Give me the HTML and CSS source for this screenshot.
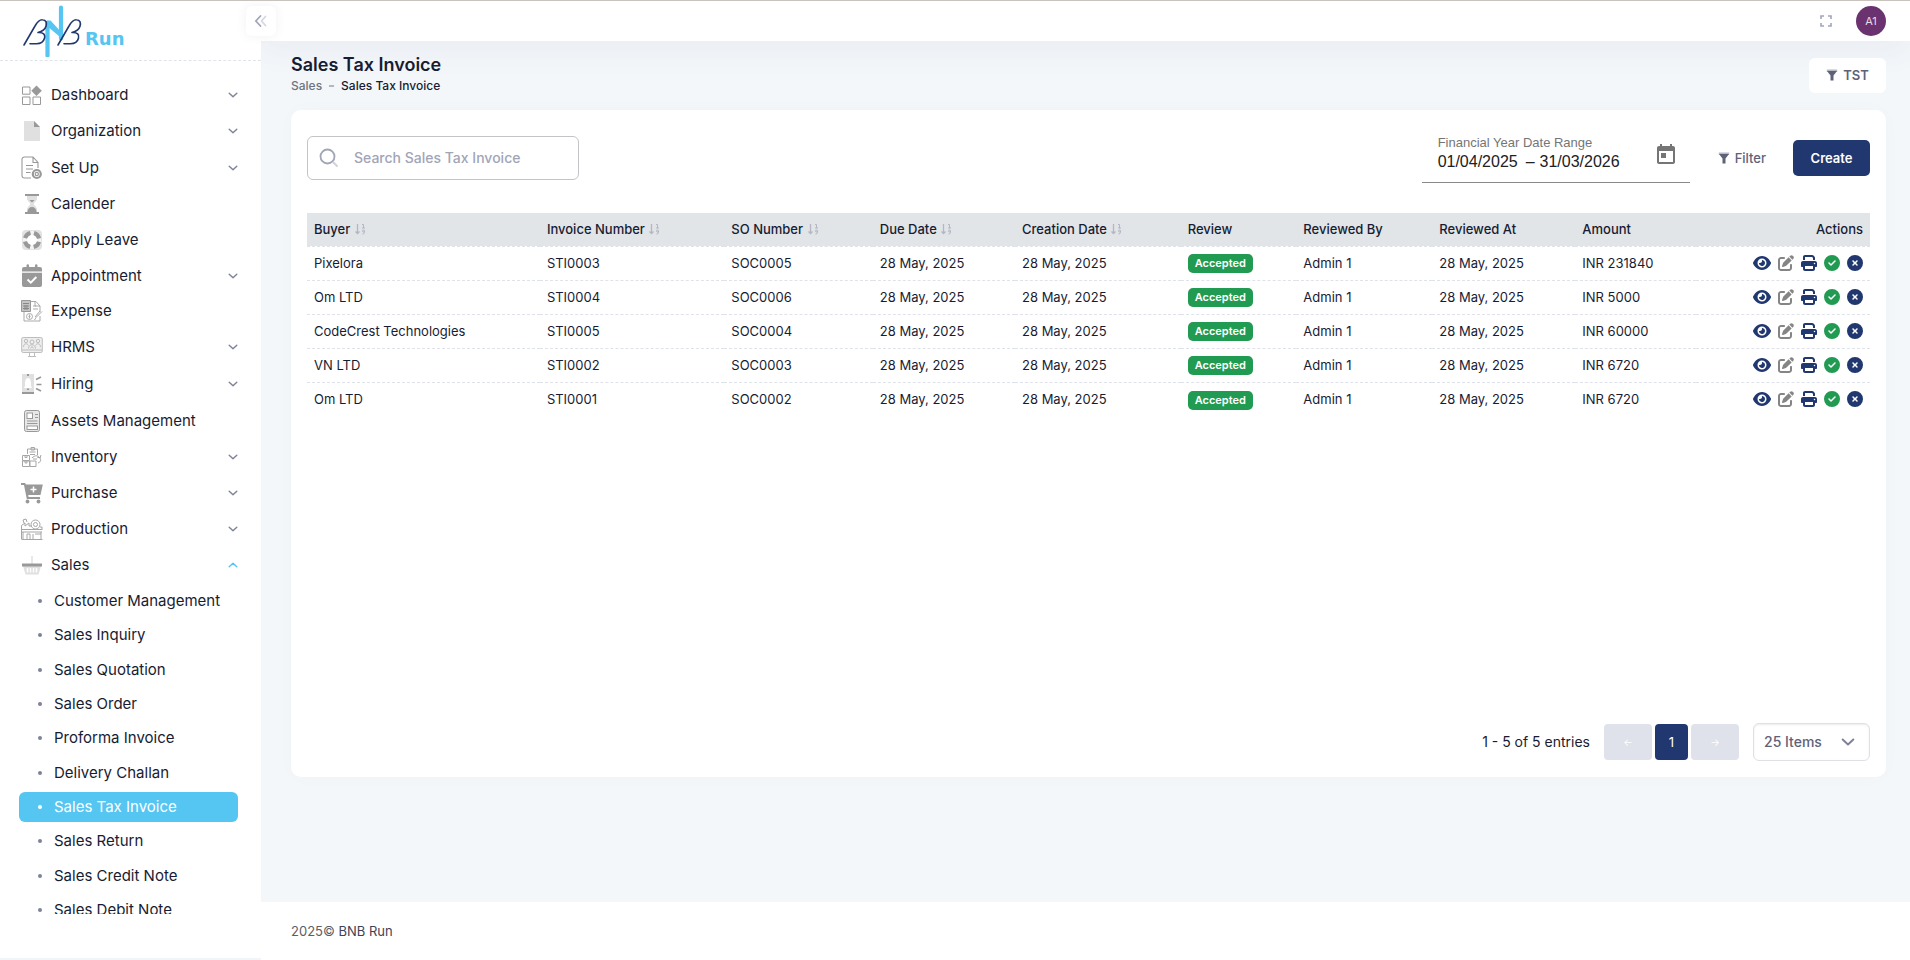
FILE: index.html
```html
<!DOCTYPE html>
<html lang="en">
<head>
<meta charset="utf-8">
<meta name="viewport" content="width=device-width, initial-scale=1">
<title>Sales Tax Invoice</title>
<link rel="stylesheet" href="styles.css">
</head>
<body>
<svg class="sprite" aria-hidden="true">
  <symbol id="i-down" viewBox="0 0 10 10"><path d="M1.2 3.2 5 6.8l3.8-3.6" fill="none" stroke="currentColor" stroke-width="1.4" stroke-linecap="round" stroke-linejoin="round"/></symbol>
  <symbol id="i-up" viewBox="0 0 10 10"><path d="M1.2 6.8 5 3.2l3.8 3.6" fill="none" stroke="currentColor" stroke-width="1.4" stroke-linecap="round" stroke-linejoin="round"/></symbol>
  <symbol id="i-dashboard" viewBox="0 0 22 22"><path d="M1.5 3h7.5v7.200h-7.500zM1.500 13h7.500v7.500h-7.500zM12 13h7.500v7.500h-7.500z" fill="none" stroke="#999" stroke-width="1"/><path d="M15.500 1.500 20.800 6.800 15.500 12 10.300 6.800z" fill="#999"/></symbol>
  <symbol id="i-organization" viewBox="0 0 22 22"><path d="M3 1h10l6 6v14H3z" fill="#e0e0e0"/><path d="M13 1l6 6h-6z" fill="#999"/></symbol>
  <symbol id="i-setup" viewBox="0 0 22 24"><path d="M10 22H3.500a2.500 2.500 0 0 1-2.500-2.500V3.500A2.500 2.500 0 0 1 3.500 1H12l5 5.500V12M12 1v5.500h5M5 9.500h7M5 13h7M5 16.500h4.500" fill="none" stroke="#999" stroke-width="1.1"/><circle cx="15.800" cy="18" r="4" fill="#fff" stroke="#999" stroke-width="2.200"/><circle cx="15.800" cy="18" r="1.600" fill="none" stroke="#999" stroke-width="1.200"/></symbol>
  <symbol id="i-calender" viewBox="0 0 22 22"><path d="M6 2.500h10v4L12.500 11l3.500 4.500v4H6v-4L9.500 11 6 6.500z" fill="#e0e0e0"/><path d="M4 1h14v2H4zM4 19h14v2H4zM8.500 7h5L11 9.500zM6.500 19c0-3 2-5 4.500-5s4.500 2 4.500 5z" fill="#999"/></symbol>
  <symbol id="i-leave" viewBox="0 0 22 22"><rect x="1" y="1" width="20" height="20" rx="4" fill="#e2e2e2"/><circle cx="11" cy="11" r="7" fill="none" stroke="#f4f4f4" stroke-width="4.500"/><circle cx="11" cy="11" r="7" fill="none" stroke="#999" stroke-width="4.500" stroke-dasharray="7.500 3.496" stroke-dashoffset="-1.750"/><circle cx="11" cy="11" r="5" fill="#fff"/></symbol>
  <symbol id="i-appointment" viewBox="0 0 22 24"><path d="M3 3h2.500V1.500a1.250 1.250 0 0 1 2.500 0V3h6V1.500a1.250 1.250 0 0 1 2.500 0V3H19a2 2 0 0 1 2 2v2.500H1V5a2 2 0 0 1 2-2zM1 8.700h20V21a2 2 0 0 1-2 2H3a2 2 0 0 1-2-2z" fill="#999"/><path d="M6.500 15.500l3.300 3.200 5.500-5.700" fill="none" stroke="#fff" stroke-width="2"/></symbol>
  <symbol id="i-expense" viewBox="0 0 22 22"><g fill="none" stroke="#aaa"><path d="M3 12v9h16v-5M10 1.500h5L19 6v6M12 6h3M12 9h5M14 1.500V6h5"/><circle cx="8.500" cy="16.500" r="3"/><path d="M8.500 14.500v4M7.500 16.500h2M21 11.500l-6 6-1.500 2.500M19 11l-5 6"/></g><path d="M.5.500h9v11h-9z" fill="#c4c4c4" stroke="#999"/><path d="M2 3.500h6M2 6h6M2 8.500h6M4 5v5M6 5v5" stroke="#888" fill="none"/></symbol>
  <symbol id="i-hrms" viewBox="0 0 22 22"><g fill="none" stroke="#bdbdbd"><rect x=".7" y="1.500" width="20.600" height="15" rx="1.500" fill="#eee"/><path d="M1 14h20M8.500 17v3M13.500 17v3M7 20.500h8"/><circle cx="11" cy="6" r="2"/><circle cx="5" cy="5" r="1.700"/><circle cx="17" cy="5" r="1.700"/><path d="M7.500 12.500c0-5 7-5 7 0M2.500 11c0-4 4-4 5-1.500M19.500 11c0-4-4-4-5-1.500M9.500 12.500l1.500-2 1.500 2"/></g></symbol>
  <symbol id="i-hiring" viewBox="0 0 22 22"><path d="M1 1h12v19H1z" fill="#e0e0e0"/><path d="M1 19h12v2H1zM6 1h2v2H6z" fill="#999"/><path d="M7 5c-3 0-3 4-3 8l-1 2h8l-1-2c0-4 0-8-3-8z" fill="#fff"/><path d="M6 15.500h2v1.500H6z" fill="#999"/><path d="M15 6.500l5-2.500M15.500 11.500h5M15 15.500l5 2.500" stroke="#999" stroke-width="1.700"/></symbol>
  <symbol id="i-assets" viewBox="0 0 22 24"><g fill="none" stroke="#999"><rect x="3.500" y="1.500" width="15" height="21" rx="2" fill="#e8e8e8"/><rect x="6" y="4" width="5.500" height="5.500" fill="#fff"/><path d="M14 5.500h3M14 8.500h3M6 12h10.500M6 14.500h10.500"/><rect x="6" y="17" width="10.500" height="3.500" fill="#fff"/></g></symbol>
  <symbol id="i-inventory" viewBox="0 0 22 22"><g fill="none" stroke="#a6a6a6"><path d="M1.500 9.500h7v5h-7zM1.500 15h7v5.500h-7zM9 15h6v5.500H9zM4 9.500v2h2v-2M4 15v2h2v-2M6.500 8V3h10v6M10 1.500h3.500V4H10zM8.500 6h6M9 8.500h5M11 12c3-3 6-3 8 0M12 13h4M17 17c3-1 3-3 2-5.500M20 9l-1 3-3-1"/></g></symbol>
  <symbol id="i-purchase" viewBox="0 0 22 22"><path d="M0 1h4l1 1.500h16.800L19.500 13H7.200l.4 2H19v2H5.800L3 3H0z" fill="#999"/><path d="M12.500 4.500v6M9.500 7.500h6" stroke="#fff" stroke-width="1.500"/><circle cx="6.500" cy="19.500" r="1.900" fill="#999"/><circle cx="17.500" cy="19.500" r="1.900" fill="#999"/></symbol>
  <symbol id="i-production" viewBox="0 0 22 22"><g fill="none" stroke="#a6a6a6"><path d="M.5 21V7.500L4 5v3l4-3v3h3M.5 21.500h21M1 11.500h20M1 14h20M2 14v7M6 21v-5h3v5M12 21v-5M20 14v7M3 5l-1-3 3-1 1 3M14 16h6"/><circle cx="14.500" cy="6.500" r="4.500"/><circle cx="14.500" cy="6.500" r="2"/><path d="M19 9h2v3"/></g></symbol>
  <symbol id="i-sales" viewBox="0 0 22 22"><path d="M10.300 2h1.400v8h-1.400zM2 12h18l-2.500 8.500h-13z" fill="#e0e0e0"/><path d="M1 9.500h20v3H1z" fill="#999"/><path d="M6.500 14v4.500M9.500 14v4.500M12.500 14v4.500M15.500 14v4.500" stroke="#fff" stroke-width="1.500"/></symbol>
  <symbol id="i-funnel" viewBox="0 0 12 12"><path d="M1 2h10L7.500 6.500v5h-3v-5z" fill="currentColor"/><path d="M.8 .5h10.400v2.200H.8z" fill="currentColor" opacity=".45"/></symbol>
  <symbol id="i-sort" viewBox="0 0 12 12"><g fill="none" stroke="#b5b5c3"><path d="M3.500 1v9.500M1.500 8.500l2 2 2-2" stroke-width="1.300"/><path d="M8 1.500h1.500V5M8 5h3M10.500 8a1 1 0 1 0-2 0 1 1 0 1 0 2 0zM10.500 8v1.500l-1 1.500H8.500"/></g></symbol>
  <symbol id="i-eye" viewBox="0 0 576 512"><path fill="currentColor" d="M288 32c-80.800 0-145.500 36.800-192.600 80.600C48.600 156 17.300 208 2.500 243.700c-3.300 7.900-3.300 16.700 0 24.600C17.300 304 48.600 356 95.400 399.400C142.500 443.200 207.200 480 288 480s145.500-36.800 192.600-80.600c46.800-43.500 78.100-95.400 93-131.100c3.300-7.900 3.300-16.700 0-24.600c-14.900-35.700-46.200-87.700-93-131.100C433.500 68.800 368.800 32 288 32zM144 256a144 144 0 1 1 288 0 144 144 0 1 1 -288 0zm144-64c0 35.300-28.700 64-64 64c-7.100 0-13.900-1.200-20.300-3.300c-5.500-1.800-11.900 1.600-11.700 7.400c.3 6.900 1.300 13.800 3.200 20.700c13.700 51.200 66.400 81.600 117.600 67.900s81.600-66.400 67.900-117.600c-11.100-41.500-47.800-69.400-88.600-71.100c-5.800-.2-9.200 6.100-7.400 11.700c2.100 6.400 3.300 13.200 3.300 20.300z"/></symbol>
  <symbol id="i-edit" viewBox="0 0 512 512"><path fill="currentColor" d="M471.600 21.700c-21.900-21.900-57.300-21.900-79.200 0L362.300 51.700l97.900 97.900 30.100-30.100c21.900-21.900 21.900-57.300 0-79.200L471.600 21.700zm-299.200 220c-6.100 6.100-10.800 13.600-13.500 21.900l-29.600 88.800c-2.900 8.600-.6 18.100 5.800 24.600s15.900 8.700 24.600 5.800l88.800-29.600c8.200-2.700 15.700-7.400 21.900-13.500L437.700 172.300 339.700 74.300 172.400 241.700zM96 64C43 64 0 107 0 160V416c0 53 43 96 96 96H352c53 0 96-43 96-96V320c0-17.700-14.300-32-32-32s-32 14.300-32 32v96c0 17.700-14.300 32-32 32H96c-17.700 0-32-14.300-32-32V160c0-17.700 14.300-32 32-32h96c17.700 0 32-14.300 32-32s-14.300-32-32-32H96z"/></symbol>
  <symbol id="i-print" viewBox="0 0 512 512"><path fill="currentColor" d="M128 0C92.700 0 64 28.700 64 64v96h64V64H354.700L384 93.300V160h64V93.300c0-17-6.700-33.300-18.700-45.300L400 18.700C388 6.700 371.700 0 354.700 0H128zM384 352v32 64H128V384 368 352H384zm64 32h32c17.700 0 32-14.300 32-32V256c0-35.300-28.700-64-64-64H64c-35.300 0-64 28.700-64 64v96c0 17.700 14.300 32 32 32H64v64c0 35.300 28.700 64 64 64H384c35.300 0 64-28.700 64-64V384zM432 248a24 24 0 1 1 0 48 24 24 0 1 1 0-48z"/></symbol>
  <symbol id="i-check" viewBox="0 0 512 512"><path fill="currentColor" d="M256 512A256 256 0 1 0 256 0a256 256 0 1 0 0 512zM369 209L241 337c-9.400 9.400-24.600 9.400-33.900 0l-64-64c-9.400-9.400-9.400-24.600 0-33.900s24.600-9.400 33.900 0l47 47L335 175c9.400-9.400 24.600-9.400 33.900 0s9.400 24.600 0 33.900z"/></symbol>
  <symbol id="i-cross" viewBox="0 0 512 512"><path fill="currentColor" d="M256 512A256 256 0 1 0 256 0a256 256 0 1 0 0 512zM175 175c9.400-9.400 24.600-9.400 33.900 0l47 47 47-47c9.400-9.400 24.600-9.400 33.900 0s9.400 24.600 0 33.900l-47 47 47 47c9.400 9.400 9.400 24.600 0 33.900s-24.600 9.400-33.900 0l-47-47-47 47c-9.400 9.400-24.600 9.400-33.900 0s-9.400-24.600 0-33.900l47-47-47-47c-9.400-9.400-9.400-24.600 0-33.900z"/></symbol>
</svg>

<div class="app">
  <aside class="sidebar">
    <a class="brand" href="#" aria-label="BNB Run">
      <svg class="brand-mark" viewBox="0 0 60 52" aria-hidden="true">
        <path d="M24.500 17.500v33M38 2.500v31" stroke="#55c5f2" stroke-width="4.200" stroke-linecap="round"/>
        <path d="M24.500 15.500 27.500 15.500 40 29v5.500L24 21z" fill="#55c5f2"/>
        <g fill="none" stroke="#20376f" stroke-width="1.600" stroke-linecap="round" stroke-linejoin="round">
          <path d="M1 40 12 21C15 15.500 17 14.500 19.500 14.700c3.500.2 4.500 3 3.500 6.500-1 3.300-4 5.300-8 6.300 5.500-.3 7.500 2 6.500 5.800-1 3.700-4 5.500-8 5.500H7"/>
          <path d="M35 40 46 21c3-5.500 5-6.500 7.500-6.300 3.500.2 4.500 3 3.500 6.500-1 3.300-4 5.300-8 6.300 5.500-.3 7.500 2 6.500 5.800-1 3.700-4 5.500-8 5.500H41"/>
        </g>
      </svg>
      <span class="brand-name">Run</span>
    </a>
    <button class="collapse" type="button" aria-label="Collapse menu">
      <svg viewBox="0 0 14 14" width="14" height="14" fill="none" stroke-width="1.800" stroke-linecap="round" stroke-linejoin="round"><path d="M6.500 2 1.800 7l4.700 5" stroke="#a1a5b7"/><path d="M11.500 2.500 7.500 7l4 4.500" stroke="#d5d7e0"/></svg>
    </button>
    <nav class="menu" aria-label="Main">
      <a class="item" href="#"><svg class="ico"><use href="#i-dashboard"/></svg><span>Dashboard</span><svg class="chev"><use href="#i-down"/></svg></a>
      <a class="item" href="#"><svg class="ico"><use href="#i-organization"/></svg><span>Organization</span><svg class="chev"><use href="#i-down"/></svg></a>
      <a class="item roomy" href="#"><svg class="ico tall"><use href="#i-setup"/></svg><span>Set Up</span><svg class="chev"><use href="#i-down"/></svg></a>
      <a class="item" href="#"><svg class="ico"><use href="#i-calender"/></svg><span>Calender</span></a>
      <a class="item" href="#"><svg class="ico"><use href="#i-leave"/></svg><span>Apply Leave</span></a>
      <a class="item snug" href="#"><svg class="ico tall"><use href="#i-appointment"/></svg><span>Appointment</span><svg class="chev"><use href="#i-down"/></svg></a>
      <a class="item" href="#"><svg class="ico"><use href="#i-expense"/></svg><span>Expense</span></a>
      <a class="item" href="#"><svg class="ico"><use href="#i-hrms"/></svg><span>HRMS</span><svg class="chev"><use href="#i-down"/></svg></a>
      <a class="item roomy" href="#"><svg class="ico"><use href="#i-hiring"/></svg><span>Hiring</span><svg class="chev"><use href="#i-down"/></svg></a>
      <a class="item roomy" href="#"><svg class="ico tall"><use href="#i-assets"/></svg><span>Assets Management</span></a>
      <a class="item" href="#"><svg class="ico"><use href="#i-inventory"/></svg><span>Inventory</span><svg class="chev"><use href="#i-down"/></svg></a>
      <a class="item" href="#"><svg class="ico"><use href="#i-purchase"/></svg><span>Purchase</span><svg class="chev"><use href="#i-down"/></svg></a>
      <a class="item" href="#"><svg class="ico"><use href="#i-production"/></svg><span>Production</span><svg class="chev"><use href="#i-down"/></svg></a>
      <a class="item open" href="#"><svg class="ico"><use href="#i-sales"/></svg><span>Sales</span><svg class="chev"><use href="#i-up"/></svg></a>
      <div class="submenu">
        <a class="sub" href="#">Customer Management</a>
        <a class="sub" href="#">Sales Inquiry</a>
        <a class="sub" href="#">Sales Quotation</a>
        <a class="sub" href="#">Sales Order</a>
        <a class="sub" href="#">Proforma Invoice</a>
        <a class="sub" href="#">Delivery Challan</a>
        <a class="sub active" href="#" aria-current="page">Sales Tax Invoice</a>
        <a class="sub" href="#">Sales Return</a>
        <a class="sub" href="#">Sales Credit Note</a>
        <a class="sub" href="#">Sales Debit Note</a>
      </div>
    </nav>
  </aside>

  <div class="page">
    <header class="topbar">
      <button class="plain" type="button" aria-label="Full screen"><svg viewBox="0 0 12 12" width="12" height="12" fill="none" stroke="#a1a5b7" stroke-width="1.600"><path d="M1 4V1h3M8 1h3v3M11 8v3H8M4 11H1V8"/></svg></button>
      <button class="avatar" type="button">A1</button>
    </header>

    <main class="content">
      <div class="titlebar">
        <div>
          <h1 class="title">Sales Tax Invoice</h1>
          <div class="crumbs"><a href="#">Sales</a><i class="dash"></i><span>Sales Tax Invoice</span></div>
        </div>
        <button class="company" type="button"><svg class="funnel"><use href="#i-funnel"/></svg>TST</button>
      </div>

      <section class="card">
        <div class="toolbar">
          <label class="search">
            <svg viewBox="0 0 20 20" width="20" height="20" fill="none" stroke-linecap="round"><circle cx="8.500" cy="8.500" r="7" stroke="#a1a5b7" stroke-width="1.800"/><path d="M14.500 14.500 18 18" stroke="#d0d2dc" stroke-width="2"/></svg>
            <input type="text" placeholder="Search Sales Tax Invoice" aria-label="Search Sales Tax Invoice">
          </label>
          <div class="tools">
            <div class="range">
              <div class="range-main">
                <label for="from">Financial Year Date Range</label>
                <div class="range-values"><input id="from" type="text" value="01/04/2025"><span>–</span><input type="text" value="31/03/2026" aria-label="End date"></div>
              </div>
              <button class="plain" type="button" aria-label="Open calendar"><svg viewBox="0 0 24 24" width="24" height="24" fill="#757575"><path d="M19 3h-1V1h-2v2H8V1H6v2H5c-1.110 0-1.990.9-1.990 2L3 19c0 1.100.89 2 2 2h14c1.100 0 2-.9 2-2V5c0-1.100-.9-2-2-2zm0 16H5V8h14v11zM7 10h5v5H7z"/></svg></button>
            </div>
            <div class="tool-buttons">
              <button class="filter" type="button"><svg class="funnel"><use href="#i-funnel"/></svg>Filter</button>
              <button class="create" type="button">Create</button>
            </div>
          </div>
        </div>

        <div class="table-wrap">
          <table class="grid">
            <colgroup><col class="c-buyer"><col class="c-invoice"><col class="c-so"><col class="c-due"><col class="c-created"><col class="c-review"><col class="c-by"><col class="c-at"><col class="c-amount"><col></colgroup>
            <thead>
              <tr><th>Buyer <svg class="sort"><use href="#i-sort"/></svg></th><th>Invoice Number <svg class="sort"><use href="#i-sort"/></svg></th><th>SO Number <svg class="sort"><use href="#i-sort"/></svg></th><th>Due Date <svg class="sort"><use href="#i-sort"/></svg></th><th>Creation Date <svg class="sort"><use href="#i-sort"/></svg></th><th>Review</th><th>Reviewed By</th><th>Reviewed At</th><th>Amount</th><th class="end">Actions</th></tr>
            </thead>
            <tbody>
              <tr><td>Pixelora</td><td>STI0003</td><td>SOC0005</td><td>28 May, 2025</td><td>28 May, 2025</td><td><span class="badge">Accepted</span></td><td>Admin 1</td><td>28 May, 2025</td><td>INR 231840</td>
                <td><div class="actions"><button type="button" aria-label="View"><svg class="wide"><use href="#i-eye"/></svg></button><button class="grey" type="button" aria-label="Edit"><svg><use href="#i-edit"/></svg></button><button type="button" aria-label="Print"><svg><use href="#i-print"/></svg></button><button class="green" type="button" aria-label="Accept"><svg><use href="#i-check"/></svg></button><button type="button" aria-label="Reject"><svg><use href="#i-cross"/></svg></button></div></td></tr>
              <tr><td>Om LTD</td><td>STI0004</td><td>SOC0006</td><td>28 May, 2025</td><td>28 May, 2025</td><td><span class="badge">Accepted</span></td><td>Admin 1</td><td>28 May, 2025</td><td>INR 5000</td>
                <td><div class="actions"><button type="button" aria-label="View"><svg class="wide"><use href="#i-eye"/></svg></button><button class="grey" type="button" aria-label="Edit"><svg><use href="#i-edit"/></svg></button><button type="button" aria-label="Print"><svg><use href="#i-print"/></svg></button><button class="green" type="button" aria-label="Accept"><svg><use href="#i-check"/></svg></button><button type="button" aria-label="Reject"><svg><use href="#i-cross"/></svg></button></div></td></tr>
              <tr><td>CodeCrest Technologies</td><td>STI0005</td><td>SOC0004</td><td>28 May, 2025</td><td>28 May, 2025</td><td><span class="badge">Accepted</span></td><td>Admin 1</td><td>28 May, 2025</td><td>INR 60000</td>
                <td><div class="actions"><button type="button" aria-label="View"><svg class="wide"><use href="#i-eye"/></svg></button><button class="grey" type="button" aria-label="Edit"><svg><use href="#i-edit"/></svg></button><button type="button" aria-label="Print"><svg><use href="#i-print"/></svg></button><button class="green" type="button" aria-label="Accept"><svg><use href="#i-check"/></svg></button><button type="button" aria-label="Reject"><svg><use href="#i-cross"/></svg></button></div></td></tr>
              <tr><td>VN LTD</td><td>STI0002</td><td>SOC0003</td><td>28 May, 2025</td><td>28 May, 2025</td><td><span class="badge">Accepted</span></td><td>Admin 1</td><td>28 May, 2025</td><td>INR 6720</td>
                <td><div class="actions"><button type="button" aria-label="View"><svg class="wide"><use href="#i-eye"/></svg></button><button class="grey" type="button" aria-label="Edit"><svg><use href="#i-edit"/></svg></button><button type="button" aria-label="Print"><svg><use href="#i-print"/></svg></button><button class="green" type="button" aria-label="Accept"><svg><use href="#i-check"/></svg></button><button type="button" aria-label="Reject"><svg><use href="#i-cross"/></svg></button></div></td></tr>
              <tr><td>Om LTD</td><td>STI0001</td><td>SOC0002</td><td>28 May, 2025</td><td>28 May, 2025</td><td><span class="badge">Accepted</span></td><td>Admin 1</td><td>28 May, 2025</td><td>INR 6720</td>
                <td><div class="actions"><button type="button" aria-label="View"><svg class="wide"><use href="#i-eye"/></svg></button><button class="grey" type="button" aria-label="Edit"><svg><use href="#i-edit"/></svg></button><button type="button" aria-label="Print"><svg><use href="#i-print"/></svg></button><button class="green" type="button" aria-label="Accept"><svg><use href="#i-check"/></svg></button><button type="button" aria-label="Reject"><svg><use href="#i-cross"/></svg></button></div></td></tr>
            </tbody>
          </table>
        </div>

        <div class="pager">
          <span class="count">1 - 5 of 5 entries</span>
          <div class="pages">
            <button class="step" type="button" disabled aria-label="Previous page">←</button>
            <button class="current" type="button">1</button>
            <button class="step" type="button" disabled aria-label="Next page">→</button>
          </div>
          <div class="size">
            <select aria-label="Items per page"><option>25 Items</option><option>50 Items</option><option>100 Items</option></select>
            <svg class="size-chev"><use href="#i-down"/></svg>
          </div>
        </div>
      </section>
    </main>

    <footer class="footer">2025© <a href="#">BNB Run</a></footer>
  </div>
</div>
</body>
</html>
```

FILE: styles.css
```css
* { box-sizing: border-box; }

body {
  margin: 0;
  border-top: 1px solid #c8c3bc;
  background: #f3f7fa;
  color: #181c32;
  font: 400 13px/20px Inter, "Noto Sans", sans-serif;
}

a { color: inherit; text-decoration: none; }
button, input, select { font: inherit; color: inherit; }
button { border: 0; padding: 0; background: none; cursor: pointer; }

.sprite { position: absolute; width: 0; height: 0; }

.app { display: flex; height: calc(100vh - 1px); }

/* Sidebar */
.sidebar {
  position: relative;
  z-index: 2;
  flex: 0 0 261px;
  display: flex;
  flex-direction: column;
  padding-bottom: 44px;
  background: #fff;
  border-bottom: 2px solid #f1f5fa;
}

.brand {
  flex: none;
  display: flex;
  align-items: center;
  height: 60px;
  padding-left: 23px;
  border-bottom: 1px dashed #e1e3ea;
}
.brand-mark { width: 60px; height: 52px; }
.brand-name {
  padding-top: 17px;
  margin-left: 2px;
  color: #55c5f2;
  font: 700 18px/20px "DejaVu Sans", sans-serif;
}

.collapse {
  position: absolute;
  top: 5px;
  right: -15px;
  display: flex;
  align-items: center;
  justify-content: center;
  width: 30px;
  height: 30px;
  border-radius: 6px;
  background: #fff;
  box-shadow: 0 0 10px rgba(113, 121, 136, 0.1);
}

.menu {
  flex: 1;
  min-height: 0;
  overflow: hidden;
  padding: 16px 23px 0 19px;
  font-size: 15px;
}
.item {
  display: flex;
  align-items: center;
  height: 36px;
  padding-left: 2px;
}
.item.roomy { height: 37px; }
.item.snug { height: 35px; }
.item span { flex: 1; margin-left: 8px; }
.ico { width: 22px; height: 22px; }
.ico.tall { height: 24px; }
.chev { width: 10px; height: 10px; color: #7e8299; }
.open .chev { color: #55c5f2; }

.submenu {
  display: flex;
  flex-direction: column;
  justify-content: space-between;
  height: 342px;
  padding-top: 3px;
}
.sub {
  flex: none;
  display: flex;
  align-items: center;
  height: 30px;
  padding-left: 19px;
  border-radius: 6px;
}
.sub::before {
  content: "";
  width: 4px;
  height: 4px;
  margin-right: 12px;
  border-radius: 50%;
  background: #7e8299;
}
.sub.active { background: #55c5f2; color: #fff; }
.sub.active::before { background: #fff; }

/* Page column */
.page { flex: 1; min-width: 0; display: flex; flex-direction: column; }

.topbar {
  flex: none;
  display: flex;
  align-items: center;
  justify-content: flex-end;
  gap: 24px;
  height: 40px;
  padding-right: 24px;
  background: #fff;
  box-shadow: 0 10px 30px rgba(82, 63, 105, 0.06);
}
.plain { display: flex; }
.avatar {
  width: 30px;
  height: 30px;
  border-radius: 50%;
  background: #6b3270;
  color: #e6dce8;
  font-size: 11px;
}

.content { flex: 1; min-height: 0; padding: 0 24px 0 30px; }

.titlebar {
  display: flex;
  align-items: center;
  justify-content: space-between;
  padding: 13px 0 14px;
}
.title { margin: 0; font-size: 18px; line-height: 22px; font-weight: 600; }
.crumbs { display: flex; align-items: center; font-size: 12px; font-weight: 500; }
.crumbs a { color: #6f7480; }
.dash { width: 5px; height: 2px; margin: 0 7px; background: #b5b5c3; }

.funnel { width: 12px; height: 12px; color: #5e6278; }
.company {
  display: flex;
  align-items: center;
  justify-content: center;
  gap: 5px;
  width: 77px;
  height: 35px;
  border-radius: 6px;
  background: #fff;
  color: #5e6278;
  font-weight: 600;
}

.card {
  display: flex;
  flex-direction: column;
  padding: 26px 16px 16px;
  border-radius: 10px;
  background: #fff;
  box-shadow: 0 0 20px rgba(76, 87, 125, 0.02);
}

.toolbar {
  display: flex;
  align-items: flex-start;
  justify-content: space-between;
  margin-bottom: 30px;
}
.search {
  display: flex;
  align-items: center;
  gap: 15px;
  width: 272px;
  height: 44px;
  padding: 0 11px;
  border: 1px solid #c4c4c8;
  border-radius: 6px;
}
.search svg { flex: none; }
.search input {
  flex: 1;
  min-width: 0;
  padding: 0;
  border: 0;
  outline: 0;
  background: none;
  font-size: 14px;
  font-weight: 500;
}
.search input::placeholder { color: #a1a5b7; opacity: 1; }

.tools { display: flex; align-items: flex-start; }
.tool-buttons { display: flex; align-items: center; height: 44px; }
.range {
  display: flex;
  justify-content: space-between;
  width: 268px;
  height: 47px;
  padding: 0 12px 0 16px;
  border-bottom: 1px solid #8a8a8a;
  font-family: "Liberation Sans", Arial, sans-serif;
}
.range label { display: block; color: #757575; font-size: 13px; line-height: 14px; }
.range .plain { padding-top: 7px; align-self: flex-start; }
.range-values { display: flex; align-items: center; color: #212121; font-size: 16px; line-height: 24px; }
.range-values input { width: 88px; padding: 0; border: 0; background: none; }
.range-values span { margin-right: 5px; }

.filter {
  display: flex;
  align-items: center;
  gap: 5px;
  margin: 0 27px 0 28px;
  color: #5e6278;
  font-weight: 500;
}
.create {
  width: 77px;
  height: 36px;
  border-radius: 5px;
  background: #20376f;
  color: #fff;
  font-weight: 600;
}

/* Invoice table */
.table-wrap { min-height: 510px; }
.grid { width: 100%; table-layout: fixed; border-collapse: collapse; }
.c-buyer { width: 14.900%; }
.c-invoice { width: 11.800%; }
.c-so { width: 9.500%; }
.c-due { width: 9.100%; }
.c-created { width: 10.600%; }
.c-review { width: 7.400%; }
.c-by { width: 8.700%; }
.c-at { width: 9.150%; }
.c-amount { width: 7.750%; }
.grid th, .grid td {
  height: 34px;
  padding: 0 7px;
  text-align: left;
  white-space: nowrap;
  border-bottom: 1px dashed #dfe2ea;
}
.grid th { height: 33px; background: #e1e5e8; font-weight: 500; }
.grid tbody tr:last-child td { border-bottom: 0; }
.grid th.end { text-align: right; }
.sort { width: 12px; height: 12px; vertical-align: -1px; }

.badge {
  display: inline-block;
  padding: 0 7px;
  border-radius: 5px;
  background: #219a52;
  color: #fff;
  font-size: 11px;
  line-height: 19px;
  font-weight: 600;
  vertical-align: middle;
}

.actions { display: flex; justify-content: flex-end; gap: 7px; }
.actions button { display: flex; color: #20376f; }
.actions .grey { color: #858585; }
.actions .green { color: #219a52; }
.actions svg { width: 16px; height: 16px; }
.actions svg.wide { width: 18px; }

/* Pagination */
.pager { display: flex; align-items: center; justify-content: flex-end; gap: 14px; }
.count { font-size: 14px; }
.pages { display: flex; gap: 3px; }
.pages button { height: 36px; border-radius: 4px; }
.pages .step { width: 48px; background: #dfe2ea; color: #fff; font-size: 10px; }
.current { width: 33px; background: #20376f; color: #fff; }
.size { position: relative; }
.size select {
  width: 117px;
  height: 38px;
  padding: 0 10px;
  border: 1px solid #dfe0e6;
  border-radius: 6px;
  appearance: none;
  background: #fff;
  box-shadow: inset 0 1px 2px rgba(0, 0, 0, 0.08);
  color: #5e6278;
  font-size: 14px;
  font-weight: 500;
}
.size-chev {
  position: absolute;
  top: 12px;
  right: 15px;
  width: 14px;
  height: 14px;
  color: #7e8299;
  pointer-events: none;
}

.footer {
  flex: none;
  padding: 19px 30px;
  background: #fff;
  color: #5b5e66;
}
.footer a { color: #3f4254; }
```
